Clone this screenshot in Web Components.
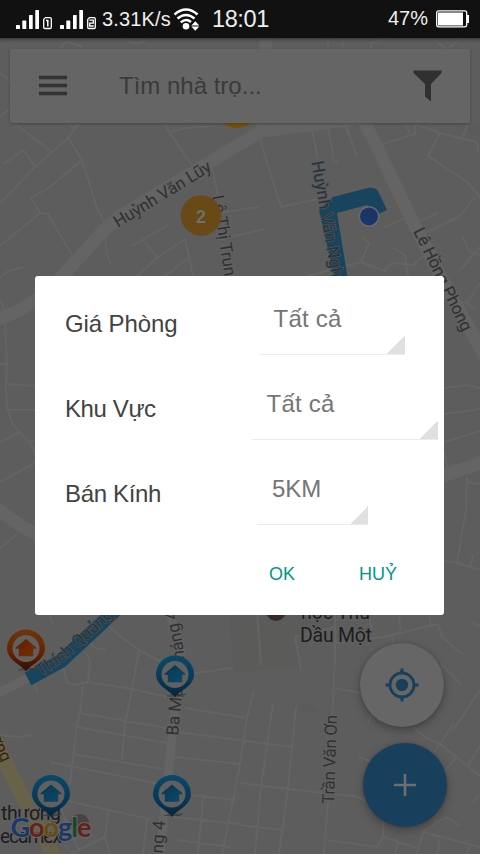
<!DOCTYPE html>
<html lang="vi"><head><meta charset="utf-8"><title>Tìm nhà trọ</title>
<style>html,body{margin:0;height:100%;overflow:hidden;background:#5d5d5d}</style></head>
<body>
<room-finder>
  <status-bar slot="status"></status-bar>
  <street-map slot="map"></street-map>
  <search-bar slot="search">Tìm nhà trọ...</search-bar>
  <round-button slot="actions" class="locate" style="--fill:#666;--ink:#183f5b">
    <svg width="34" height="34" viewBox="0 0 34 34" fill="none" stroke="currentColor"><circle cx="17" cy="17" r="12" stroke-width="2.8"/><circle cx="17" cy="17" r="6.2" fill="currentColor" stroke="none"/><path d="M17 .5V5M17 29v4.5M.5 17H5M29 17h4.5" stroke-width="3"/></svg>
  </round-button>
  <round-button slot="actions" class="add" style="--fill:#183f5b;--ink:#6c6f72">
    <svg width="22" height="22" viewBox="0 0 22 22" stroke="currentColor" stroke-width="2.6"><path d="M11 0v22M0 11h22"/></svg>
  </round-button>
  <filter-dialog slot="dialog">
    <filter-row label="Giá Phòng" style="--track:-.1px"><drop-field style="--start:225px;--w:145px;--pad:13.5px;--track:.25px">Tất cả</drop-field></filter-row>
    <filter-row label="Khu Vực" style="--track:-.4px"><drop-field style="--start:217px;--w:186px;--pad:14.5px;--track:.25px">Tất cả</drop-field></filter-row>
    <filter-row label="Bán Kính" style="--track:-.35px"><drop-field style="--start:222px;--w:111px;--pad:15px;--track:0px">5KM</drop-field></filter-row>
    <text-button slot="buttons">OK</text-button>
    <text-button slot="buttons">HUỶ</text-button>
  </filter-dialog>
</room-finder>
<script>
const define=(name,html)=>customElements.define(name,class extends HTMLElement{
  constructor(){super();const t=document.createElement('template');t.innerHTML=typeof html==='function'?html(this):html;
    this.attachShadow({mode:'open'}).append(t.content.cloneNode(true));}
});

define('room-finder',`<style>
:host{display:block;position:relative;width:480px;height:854px;overflow:hidden;font-family:"Liberation Sans",Arial,sans-serif}
.map{position:absolute;inset:0}
.front{position:relative;display:flex;flex-direction:column;height:100%}
.search{padding:11px 10px 0}
.actions{position:absolute;right:33px;bottom:27px;display:flex;flex-direction:column;gap:16px;align-items:flex-end}
.actions ::slotted(.locate){margin-right:3px}
.modal{position:absolute;left:35px;top:276px}
</style><div class="map"><slot name="map"></slot></div>
<div class="front"><slot name="status"></slot><div class="search"><slot name="search"></slot></div></div>
<div class="actions"><slot name="actions"></slot></div><div class="modal"><slot name="dialog"></slot></div>`);

const signal=n=>`<svg width="37" height="20" viewBox="0 0 37 20" fill="#fff"><rect x="0" y="15" width="4" height="4" rx=".6"/><rect x="6.3" y="10.5" width="4" height="8.5" rx=".6"/><rect x="13" y="5" width="3.7" height="14" rx=".6"/><rect x="19.3" y="0" width="3.7" height="19" rx=".6"/><path d="M29.5 7.6H34a1.3 1.3 0 0 1 1.3 1.3v8.3a1.3 1.3 0 0 1-1.3 1.3h-5a1.3 1.3 0 0 1-1.3-1.3V9.4z" fill="none" stroke="#fff" stroke-width="1.3"/>${n===1?'<path d="M30 10.4h1.8v6" fill="none" stroke="#fff" stroke-width="1.5"/>':'<path d="M29.3 10.2h4v2.9h-3.6v2.9h4" fill="none" stroke="#fff" stroke-width="1.3"/>'}</svg>`;
define('status-bar',`<style>
:host{display:flex;align-items:center;box-sizing:border-box;height:38px;padding:0 11px 0 16px;background:#111;color:#eee;font-size:20px;line-height:38px;white-space:nowrap}
svg{display:block;flex:none}.sim{position:relative;top:1px}.one{margin-right:7px}.rate{margin-left:5px;width:71px;letter-spacing:.15px}.wifi{margin-left:1px;position:relative;top:1px}.time{font-size:23.5px;letter-spacing:-.4px;margin-left:12px}.pct{margin-left:auto;margin-right:8px;position:relative;top:-1px}
</style><span class="sim one">${signal(1)}</span><span class="sim">${signal(2)}</span><span class="rate">3.31K/s</span>
<svg class="wifi" width="26" height="24" viewBox="0 0 26 24"><g fill="none" stroke="#fff" stroke-width="2.4"><path d="M.5 6.500Q12-3.500 23.500 6.500M3.500 10.500Q12 3.500 20.500 10.500M6.800 14.300Q12 10 17 14"/></g><circle cx="12" cy="18.300" r="3.300" fill="#fff"/><path d="m21.300 13.300 4 4.300h-8zm0 9.500 4-4.300h-8z" fill="#fff"/></svg>
<span class="time">18:01</span><span class="pct">47%</span>
<svg width="33" height="18" viewBox="0 0 33 18"><rect x=".7" y=".9" width="30" height="16" rx="1.800" fill="none" stroke="#fff" stroke-width="1.300"/><path d="M2 2.500h25v13H2zM31 5h2v8h-2z" fill="#fff"/></svg>`);

define('search-bar',`<style>
:host{display:flex;align-items:center;box-sizing:border-box;height:74px;padding:0 28px 0 29px;background:#656565;border-radius:2px;box-shadow:0 1px 3px #3339;color:#3a3a3a;font-size:24px}
.label{margin-left:52px;flex:1;padding-bottom:1px}svg{display:block}
</style><svg width="28" height="22" viewBox="0 0 28 22" stroke="#323232" stroke-width="3.600"><path d="M0 2.500h28M0 10.500h28M0 18.500h28"/></svg><span class="label"><slot></slot></span>
<svg width="29" height="32" viewBox="0 0 29 32" fill="#303030"><path d="M.5.500h28V3L18 14v17.500l-6-5V14L.5 3z"/></svg>`);

define('round-button',`<style>:host{display:flex;align-items:center;justify-content:center;width:84px;height:84px;border-radius:50%;background:var(--fill);color:var(--ink);box-shadow:0 4px 8px #2226,0 0 3px #2224}::slotted(svg){display:block}</style><slot></slot>`);

define('filter-dialog',`<style>:host{display:flex;flex-direction:column;width:409px;height:339px;background:#fff;border-radius:3px;color:#424242}
.rows{padding-top:5px}.buttons{display:flex;padding:9px 0 0 214px;gap:24px}</style><div class="rows"><slot></slot></div><div class="buttons"><slot name="buttons"></slot></div>`);
define('filter-row',el=>`<style>:host{display:grid;grid-template-areas:"cell";height:85px;font-size:24px}
.label,slot{grid-area:cell}.label{padding-left:30px;line-height:86px;letter-spacing:var(--track)}slot{display:block}</style><span class="label">${el.getAttribute('label')}</span><slot></slot>`);
define('drop-field',`<style>:host{display:block;box-sizing:border-box;margin-left:var(--start);width:var(--w);height:74px;padding-left:var(--pad);line-height:76px;letter-spacing:var(--track);color:#757575;border-bottom:1px solid #ececec;background:linear-gradient(135deg,transparent 50%,#e0e0e0 50%) right bottom/19px 19px no-repeat;background-origin:border-box}</style><slot></slot>`);
define('text-button',`<style>:host{display:block;padding:0 20px;font-size:18px;line-height:58px;color:#009688}</style><slot></slot>`);

const pin=(x,y,c)=>`<g transform="translate(${x} ${y})"><path d="M-8 21.500H9M-5 20H11" stroke="#383838" stroke-width=".8"/><path d="M0 23C-3 17-19 12-19 0a19 19 0 0 1 38 0C19 12 3 17 0 23z" fill="url(#${c})"/><circle r="13.500" fill="#606060"/><path d="M0-9.500 10.500-.8V.3H7.200V7.800H-7.200V.3h-3.300v-1.100z" fill="url(#${c}h)"/></g>`;
const thin=`M0 203 35 167 68 138 80 123M10 120 52 152M4 164 23 150 35 166M68 138 82 160 97 208 105 223M82 160 50 187 31 198 40 213 48 214 75 260M40 213 0 246M0 278 8 271 23 267M68 123l6 6M163 120 169 132 192 165M169 132 187 128 215 126M212 168 218 195M132 246 168 225M143 241 158 257 137 276M158 257 185 239 193 276M165 276 188 258M105 238 107 255 111 265M220 213 258 207M220 239 265 229
M260 140 281 207 318 199M312 130 318 160M328 127 334 161 338 162M346 125 357 157M380 145 415 134V124L440 133 477 142 478 153M440 133 428 156 468 183 480 197M475 197 459 217 427 232M383 228 407 217M417 222 438 213M362 237 369 243 361 262M307 276 361 262 384 271 392 263 413 265 430 250M393 248 405 255 408 276M462 236 470 252 480 255M480 247 460 270M463 137 469 120M430 125 435 110
M444 388 467 385 480 388M444 414 480 409M444 442 480 431M444 452 448 470M467 477 466 510 457 563M467 482 480 484M444 561 457 563 480 570M470 568 473 555M453 300 467 303 480 283M467 303 475 310
M0 300 5 310M5 323 7 363 6 387 7 407 13 425 30 443 36 456M0 364H6M6 384 35 386M7 410H35M0 442 20 432M30 442 35 440M0 482 35 463M0 548 18 533
M48 612 53 624M88 642 95 648 106 650M108 625 120 636 139 650 167 665M139 650 132 690 125 724 122 760M85 652 90 660 88 682M62 663 67 683 75 685 88 682 132 689 167 697M83 686 80 713 77 724 70 785M31 680 38 692M80 713 167 728M185 708 247 718M195 673 232 668
M77 727 167 743M50 762 160 784M73 754 163 769M67 801 150 819M108 811 105 837 70 854M147 819 143 854M105 837 110 854M174 757 240 764M177 732 240 740M190 795 236 800M173 817 240 824M203 797 198 854M177 840 230 847M60 807 79 851M0 735 18 737 33 735
M254 690 247 718 240 764 233 800 222 854M273 703 267 744 260 797 255 854M296 707 288 787 279 854M240 740 292 747M240 783 322 793 355 796 367 802M240 825 282 830M328 802 324 854M327 840 377 847 383 837 417 848M383 837V820M398 842 395 854M417 854 423 832 440 820M433 817 438 822 447 817 460 826M423 832 480 847M440 839 437 854M469 847 467 854M413 727 425 737 440 744 480 776M453 724 433 754M457 757 445 771M480 746 468 766M358 757 370 761M473 802 480 794
M257 612 261 665M335 612V660L332 720M301 671 295 637 335 627M335 643 383 637 438 624 442 637 463 655M368 612 372 630M398 612 401 630M428 612 431 625M392 635 393 643M335 688 360 693M372 715 368 723M440 663 461 684M473 623 480 626M480 690 453 730
M60 49 67 41 82 47M125 39 136 44 147 40M0 73 12 83M0 117 14 105M74 129 81 119M328 39V49M342 38 344 50M371 50V43L395 36M435 40 447 50 460 38M344 120 348 135M405 124 410 133`;
define('street-map',`<style>:host{display:block}svg{display:block}text{font-family:Roboto,sans-serif;font-size:17px;fill:#303030;stroke:#626262;stroke-width:2px;paint-order:stroke}text.route{stroke:#4b5a63;stroke-width:1.200px}.place{font-size:19.500px;fill:#1c1c1c;stroke:#606060}</style>
<svg width="480" height="854" viewBox="0 0 480 854"><defs>
<linearGradient id="b" x2="0" y2="1"><stop stop-color="#0a4969"/><stop offset=".55" stop-color="#083a58"/><stop offset="1" stop-color="#04243b"/></linearGradient>
<linearGradient id="bh" x2="1" y2="1"><stop stop-color="#093551"/><stop offset="1" stop-color="#0b4b69"/></linearGradient>
<linearGradient id="o" x2="0" y2="1"><stop stop-color="#6f3506"/><stop offset=".55" stop-color="#652304"/><stop offset="1" stop-color="#320b02"/></linearGradient>
<linearGradient id="oh" x2="1" y2="1"><stop stop-color="#601c03"/><stop offset="1" stop-color="#763006"/></linearGradient>
<linearGradient id="sh" x2="0" y2="1"><stop stop-color="#333" stop-opacity=".8"/><stop offset="1" stop-color="#5d5d5d" stop-opacity="0"/></linearGradient>
<path id="tq" d="M41 677 68 658 120 610"/><path id="bm" d="M178 736 182 695Q187 660 181 635L174 600"/></defs>
<path fill="#5d5d5d" d="M0 0h480v854H0z"/>
<path fill="#5b5b59" d="M229 612h106v14l-40 9 5 32-66 6zM298 703l21 4-3 7-18-3zM455 124h25v13z"/>
<path d="${thin}" fill="none" stroke="#646464" stroke-width="2" stroke-linejoin="round"/>
<g fill="none" stroke="#646464" stroke-linejoin="round"><path stroke-width="13" d="M-4 319Q25 312 55 284L107 227 125 213 240 144 262 131 362 118 375 143 412 220 445 285 486 358M262 131 266 36M-4 508 23 527 40 536M440 477 484 462"/><path stroke-width="9" d="M-3 694 30 677M168 608 181 650 176 700 160 854"/></g>
<path d="M-7 735Q15 786 60 866" fill="none" stroke="#69624a" stroke-width="15"/>
<path d="M333 197 368 188Q375 187 378 191L387 210 378 214 367 205 337 213 348 280H335L319 210z" fill="#18445e"/>
<path d="M28 679 61 661 119 607" fill="none" stroke="#18445e" stroke-width="14"/>
<circle cx="369" cy="216.500" r="10.500" fill="#666a6d"/><circle cx="369" cy="216.500" r="9" fill="#1c3567"/>
<g>
<text transform="translate(118 228) rotate(-31.500)" textLength="111">Huỳnh Văn Lũy</text>
<text transform="translate(212 196) rotate(81)" textLength="91">Lê Thị Trung</text>
<text transform="translate(311.500 162) rotate(80)" textLength="127" class="route">Huỳnh Văn Nghệ</text>
<text transform="translate(413 231) rotate(64)" textLength="113">Lê Hồng Phong</text>
<text class="route"><textPath href="#tq" textLength="96">Thích Quảng</textPath></text>
<text><textPath href="#bm" textLength="128">Ba Mươi Tháng 4</textPath></text>
<text transform="translate(165 821) rotate(-86)" text-anchor="end">Ba Mươi Tháng 4</text>
<text transform="translate(334 804) rotate(-88)" textLength="89">Trần Văn Ơn</text>
<text transform="translate(2 763) rotate(66)" text-anchor="end" style="fill:#35250f;stroke:#69624a">Bình Dương</text></g>
<circle cx="276" cy="611" r="10" fill="#39292a"/>
<g class="place"><text class="place" x="301" y="619" textLength="69">học Thủ</text><text class="place" x="300" y="642" textLength="72">Dầu Một</text><text class="place" x="1" y="820" textLength="60">thương</text><text class="place" x="0" y="843" textLength="62">ecamex</text></g>
<circle cx="201" cy="215.500" r="20.300" fill="#694916"/><text x="201" y="222.500" text-anchor="middle" style="font-family:'Liberation Sans',sans-serif;font-weight:700;font-size:18px;fill:#6e6e6e;stroke:none">2</text><circle cx="237" cy="108" r="20" fill="#785000"/>
${pin(26,648.500,'o')}${pin(175,674.500,'b')}${pin(51,794,'b')}${pin(172,794,'b')}
<circle cx="80" cy="823" r="9" fill="#4a4141"/><text x="10.500" y="836.500" textLength="81" style="font-family:Lato,sans-serif;font-weight:700;font-size:27px;stroke:#666;stroke-width:2px"><tspan fill="#1a3768">G</tspan><tspan fill="#662019">o</tspan><tspan fill="#684d05">o</tspan><tspan fill="#1a3768">g</tspan><tspan fill="#17472a">l</tspan><tspan fill="#662019">e</tspan></text>
<rect y="38" width="480" height="6" fill="url(#sh)"/></svg>`);
</script></body></html>
